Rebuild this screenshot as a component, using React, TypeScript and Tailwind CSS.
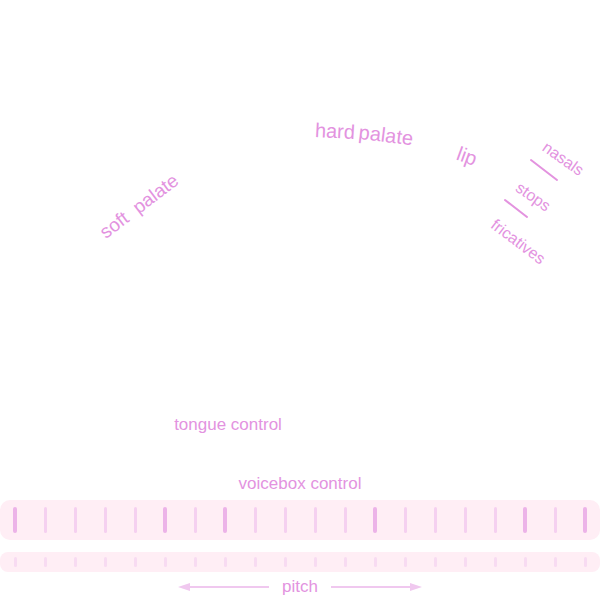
import React from 'react';

const ink = 'text-[#e393df]';

// tick columns along the voicebox keyboard; heavier marks on these
const boldTicks = [0, 5, 7, 12, 17, 19];
const ticks = Array.from({ length: 20 }, (_, i) => i);

interface LabelProps {
  text: string;
  x: number;
  y: number;
  className: string;
}

// labels sit on the tract drawing at fixed spots, so they are placed by centre point
const Label = ({ text, x, y, className }: LabelProps) => (
  <span
    className={`absolute -translate-x-1/2 -translate-y-1/2 whitespace-nowrap leading-none ${ink} ${className}`}
    style={{ left: x, top: y }}
  >
    {text}
  </span>
);

const TractDiagram = () => (
  <div className="relative h-[474px] w-full">
    <Label text="hard" x={335} y={131} className="text-[20px] rotate-[3deg]" />
    <Label text="palate" x={386} y={135} className="text-[20px] rotate-[7deg]" />
    <Label text="soft  palate" x={139} y={206} className="text-[19px] rotate-[-37deg] whitespace-pre" />
    <Label text="lip" x={467} y={156} className="text-[20px] rotate-[20deg]" />
    <Label text="nasals" x={563} y={159} className="text-[16px] rotate-[35deg]" />
    <Label text="stops" x={533} y={197} className="text-[16px] rotate-[35deg]" />
    <Label text="fricatives" x={518} y={242} className="text-[16px] rotate-[37deg]" />
    <Label text="tongue control" x={228} y={424} className="text-[17px]" />

    {/* divider marks between the consonant zones */}
    <svg className="absolute inset-0" width="600" height="474" viewBox="0 0 600 474">
      <line x1="531" y1="160" x2="557" y2="180" stroke="#e393df" strokeWidth="2" strokeLinecap="round" />
      <line x1="505" y1="200" x2="527" y2="217" stroke="#e393df" strokeWidth="2" strokeLinecap="round" />
    </svg>
  </div>
);

const Keyboard = () => (
  <div className="flex flex-col">
    <div className={`h-5 text-center text-[17px] leading-5 ${ink}`}>voicebox control</div>

    <div className="mt-[6px] grid h-10 grid-cols-20 items-center rounded-[10px] bg-[#ffeef5]">
      {ticks.map((i) => (
        <div key={i} className="flex justify-center">
          {boldTicks.includes(i) ? (
            <div className="h-[26px] w-[4px] rounded-full bg-[#ecb3e8]" />
          ) : (
            <div className="h-[26px] w-[3px] rounded-full bg-[#f5d0f0]" />
          )}
        </div>
      ))}
    </div>

    <div className="mt-3 grid h-5 grid-cols-20 items-center rounded-[8px] bg-[#ffeef5]">
      {ticks.map((i) => (
        <div key={i} className="flex justify-center">
          <div className="h-[10px] w-[3px] rounded-full bg-[#f8dbf2]" />
        </div>
      ))}
    </div>

    <div className="mt-[5px] flex h-5 items-center justify-center gap-[10px]">
      <svg width="92" height="10" viewBox="0 0 92 10">
        <line x1="8" y1="5" x2="91" y2="5" stroke="#f0c8ef" strokeWidth="2" />
        <polygon points="0,5 12,1 12,9" fill="#f0c8ef" />
      </svg>
      <span className={`w-[40px] text-center text-[17px] leading-5 ${ink}`}>pitch</span>
      <svg width="92" height="10" viewBox="0 0 92 10">
        <line x1="1" y1="5" x2="84" y2="5" stroke="#f0c8ef" strokeWidth="2" />
        <polygon points="92,5 80,1 80,9" fill="#f0c8ef" />
      </svg>
    </div>
  </div>
);

export default function App() {
  return (
    <div className="h-[600px] w-[600px] overflow-hidden bg-white font-['Liberation_Sans',Arial,sans-serif]">
      <TractDiagram />
      <Keyboard />
    </div>
  );
}
